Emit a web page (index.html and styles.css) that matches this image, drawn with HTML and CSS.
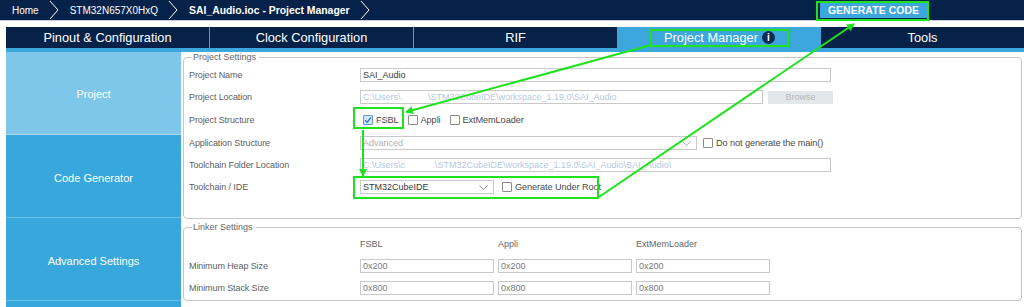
FILE: index.html
```html
<!DOCTYPE html>
<html>
<head>
<meta charset="utf-8">
<link rel="stylesheet" href="styles.css">
</head>
<body>
<div class="page">
  <header class="topbar">
    <nav class="crumbs">
      <span class="crumb">Home</span>
      <svg class="chev" width="10" height="20" viewBox="0 0 10 20"><polyline points="1,1 9,10 1,19" fill="none" stroke="#ffffff" stroke-width="1"/></svg>
      <span class="crumb">STM32N657X0HxQ</span>
      <svg class="chev" width="10" height="20" viewBox="0 0 10 20"><polyline points="1,1 9,10 1,19" fill="none" stroke="#ffffff" stroke-width="1"/></svg>
      <span class="crumb bold">SAI_Audio.ioc - Project Manager</span>
      <svg class="chev" width="10" height="20" viewBox="0 0 10 20"><polyline points="1,1 9,10 1,19" fill="none" stroke="#ffffff" stroke-width="1"/></svg>
    </nav>
    <button class="gen">GENERATE CODE</button>
  </header>
  <div class="gap"></div>
  <div class="tabs">
    <div class="tab">Pinout &amp; Configuration</div>
    <div class="tab">Clock Configuration</div>
    <div class="tab">RIF</div>
    <div class="tab active">Project Manager <span class="info">i</span></div>
    <div class="tab">Tools</div>
  </div>
  <div class="tabline"></div>
  <main class="main">
    <aside class="side">
      <div class="side-item selected">Project</div>
      <div class="side-item">Code Generator</div>
      <div class="side-item">Advanced Settings</div>
      <div class="side-item"></div>
    </aside>
    <section class="content">
      <fieldset class="group ps">
        <legend>Project Settings</legend>
        <div class="form">
          <div class="lbl">Project Name</div>
          <div class="val"><div class="input w-full dark">SAI_Audio</div></div>

          <div class="lbl">Project Location</div>
          <div class="val"><div class="input w-loc faded">C:\Users\           \STM32CubeIDE\workspace_1.19.0\SAI_Audio</div><div class="browse">Browse</div></div>

          <div class="lbl">Project Structure</div>
          <div class="val checks">
            <label class="cb"><span class="box on"><svg width="8" height="8" viewBox="0 0 8 8"><polyline points="1,4.2 3.2,6.3 7,1.5" fill="none" stroke="#2f7fd0" stroke-width="1.4"/></svg></span>FSBL</label>
            <label class="cb"><span class="box"></span>Appli</label>
            <label class="cb"><span class="box"></span>ExtMemLoader</label>
          </div>

          <div class="lbl">Application Structure</div>
          <div class="val"><div class="input select w-app grey">Advanced<svg class="arrow" width="9" height="6" viewBox="0 0 9 6"><polyline points="0.5,0.5 4.5,4.5 8.5,0.5" fill="none" stroke="#b5b5b5" stroke-width="1"/></svg></div><label class="cb after"><span class="box"></span>Do not generate the main()</label></div>

          <div class="lbl">Toolchain Folder Location</div>
          <div class="val"><div class="input w-full faded">C:\Users\c            \STM32CubeIDE\workspace_1.19.0\SAI_Audio\SAI_Audio\</div></div>

          <div class="lbl">Toolchain / IDE</div>
          <div class="val"><div class="input select w-ide dark">STM32CubeIDE<svg class="arrow" width="9" height="6" viewBox="0 0 9 6"><polyline points="0.5,0.5 4.5,4.5 8.5,0.5" fill="none" stroke="#8a8a8a" stroke-width="1"/></svg></div><label class="cb after2"><span class="box"></span>Generate Under Root</label></div>
        </div>
      </fieldset>
      <fieldset class="group ls">
        <legend>Linker Settings</legend>
        <div class="linker">
          <div class="lbl"></div>
          <div class="hdr">FSBL</div>
          <div class="hdr">Appli</div>
          <div class="hdr">ExtMemLoader</div>

          <div class="lbl">Minimum Heap Size</div>
          <div class="input mid">0x200</div>
          <div class="input mid">0x200</div>
          <div class="input mid">0x200</div>

          <div class="lbl">Minimum Stack Size</div>
          <div class="input mid">0x800</div>
          <div class="input mid">0x800</div>
          <div class="input mid">0x800</div>
        </div>
      </fieldset>
    </section>
  </main>

  <svg class="annot" width="1024" height="307" viewBox="0 0 1024 307">
    <defs>
      <marker id="ah" markerWidth="8" markerHeight="8" refX="7" refY="4" orient="auto" markerUnits="userSpaceOnUse">
        <polygon points="0,0 8,4 0,8" fill="#1de21d"/>
      </marker>
    </defs>
    <g fill="none" stroke="#1de21d" stroke-width="2">
      <rect x="817" y="2" width="111" height="18"/>
      <rect x="651" y="30" width="137" height="16"/>
      <rect x="354" y="108" width="49" height="20"/>
      <rect x="354" y="177" width="244" height="21"/>
      <line x1="651" y1="45" x2="406" y2="112" marker-end="url(#ah)"/>
      <line x1="363" y1="130" x2="363" y2="176" marker-end="url(#ah)"/>
      <line x1="599" y1="197" x2="854" y2="24" marker-end="url(#ah)"/>
    </g>
  </svg>
</div>
</body>
</html>
```

FILE: styles.css
```css
* { box-sizing: border-box; }
html, body { margin: 0; padding: 0; background: #ffffff; }
body { font-family: "Liberation Sans", Arial, sans-serif; width: 1024px; height: 307px; overflow: hidden; }
.page { position: relative; width: 1024px; height: 307px; overflow: hidden; }

.topbar { height: 20px; background: #072249; display: flex; align-items: center; justify-content: space-between; }
.crumbs { display: flex; align-items: center; height: 20px; padding-left: 12px; }
.crumb { color: #ffffff; font-size: 10px; white-space: nowrap; }
.crumb.bold { font-weight: bold; font-size: 10.4px; }
.chev { margin: 0 11px 0 10px; display: block; }
.gen { margin-right: 97px; height: 16px; width: 107px; border: 0; padding: 0; background: #3ba7dc; color: #ffffff; font-family: "Liberation Sans", Arial, sans-serif; font-weight: bold; font-size: 10.4px; letter-spacing: 0.1px; }

.gap { height: 7px; border-top: 1px solid #c9ced6; }
.tabs { margin-left: 6px; height: 21px; display: flex; background: #072249; }
.tab { flex: 1; display: flex; align-items: center; justify-content: center; color: #ffffff; font-size: 12.8px; border-left: 1px solid #7d8ea6; white-space: nowrap; }
.tab:first-child { border-left: 0; }
.tab.active { background: #3ba7dc; border-left-color: #3ba7dc; }
.tab.active + .tab { border-left: 0; }
.info { display: inline-flex; width: 13px; height: 13px; border-radius: 50%; background: #0b2b57; color: #ffffff; font-weight: bold; font-size: 10px; align-items: center; justify-content: center; margin-left: 4px; font-family: "Liberation Sans", Arial, sans-serif; }
.tabline { margin-left: 6px; height: 4px; background: #3ba7dc; }

.main { display: flex; height: 255px; }
.side { width: 175px; margin-left: 6px; display: flex; flex-direction: column; background: #38a7dc; }
.side-item { height: 83px; flex: none; display: flex; align-items: center; justify-content: center; color: #ffffff; font-size: 11px; background: #38a7dc; border-bottom: 1px solid #6cc0e8; padding-top: 3px; }
.side-item.selected { background: #7ec6ea; border-bottom-color: #a9d8f0; padding-top: 1px; }
.side-item:last-child { border-bottom: 0; }

.content { flex: 1; margin-left: 2px; margin-right: 2px; display: flex; flex-direction: column; }
.group { margin: 0; border: 1px solid #c6c6c6; border-radius: 4px; padding: 0; min-width: 0; }
.group legend { font-size: 9px; line-height: 10px; color: #666666; padding: 0 3px 0 1px; margin-left: 3px; }
.ps { padding: 2px 0 21px 5px; }
.ls { margin-top: 3px; padding: 1px 0 1px 5px; }

.form { display: grid; grid-template-columns: 171px 1fr; grid-template-rows: 22px 22px 23px 23px 22px 21px; align-items: center; }
.lbl { font-size: 9px; color: #5e5e5e; white-space: nowrap; letter-spacing: -0.1px; }
.val { display: flex; align-items: center; }
.input { height: 14px; border: 1px solid #c9c9c9; font-size: 9px; line-height: 12px; padding: 0 2px; white-space: pre; overflow: hidden; background: #ffffff; color: #666666; }
.input.dark { color: #3a3a3a; }
.input.faded { color: #b5c9e3; }
.input.grey { color: #b0b0b0; }
.input.mid { color: #7a7a7a; }
.w-full { width: 471px; }
.w-loc { width: 403px; }
.w-app { width: 337px; }
.w-ide { width: 134px; }
.select { position: relative; padding-right: 14px; }
.select .arrow { position: absolute; right: 5px; top: 4px; }
.browse { margin-left: 5px; width: 65px; height: 13px; background: #e4e7ea; color: #b3b8bd; font-size: 9px; line-height: 13px; text-align: center; }

.checks { padding-left: 3px; }
.cb { display: inline-flex; align-items: center; font-size: 9.2px; color: #4a4a4a; white-space: nowrap; margin-right: 9px; letter-spacing: -0.1px; }
.box { width: 10px; height: 10px; border: 1px solid #8e8e8e; border-radius: 1px; background: #ffffff; margin-right: 3px; display: inline-flex; align-items: center; justify-content: center; }
.box.on { background: #d7e9f9; border-color: #5c9ad6; }
.after { margin-left: 6px; }
.after2 { margin-left: 8px; }

.linker { display: grid; grid-template-columns: 167px 134px 134px 134px; column-gap: 4px; grid-template-rows: 22px 22px 22px; align-items: center; }
.hdr { font-size: 9px; color: #666666; }

.annot { position: absolute; left: 0; top: 0; pointer-events: none; }
```
